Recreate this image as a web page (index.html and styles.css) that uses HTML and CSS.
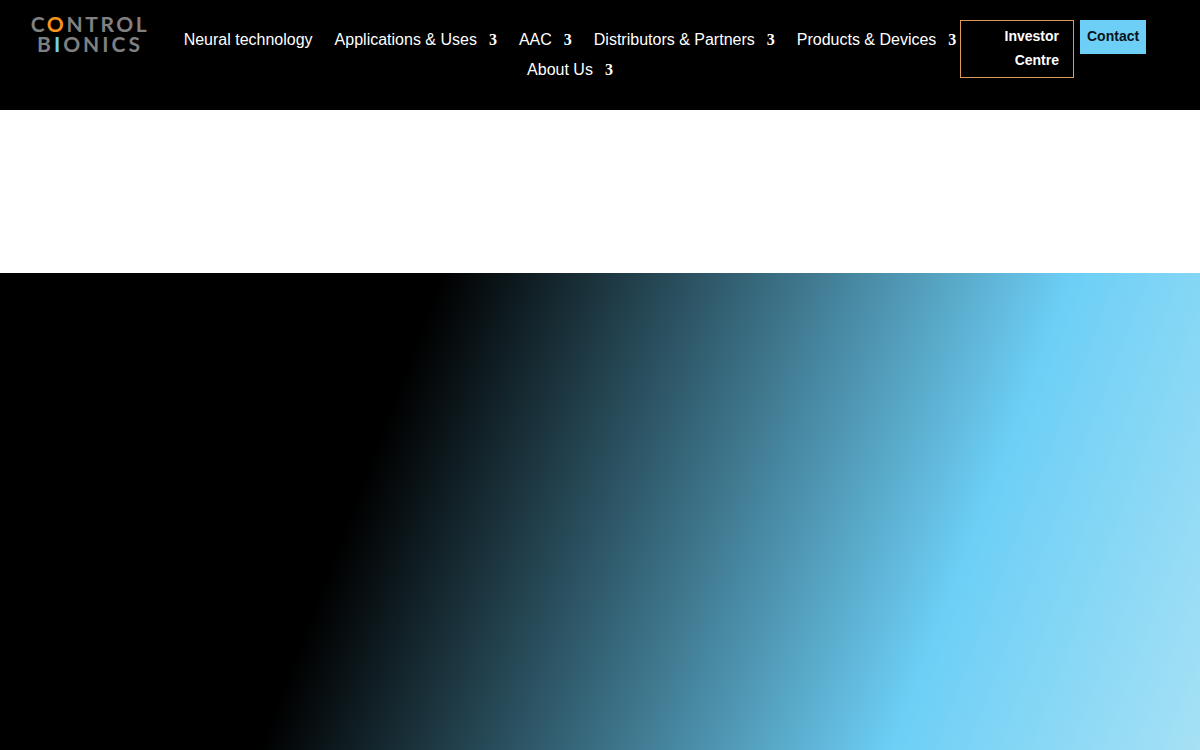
FILE: index.html
```html
<!DOCTYPE html>
<html lang="en">
<head>
<meta charset="utf-8">
<title>Control Bionics</title>
<link rel="stylesheet" href="styles.css">
</head>
<body>
<header class="header">
  <a class="logo" href="#">
    <span class="logo-line logo-top">C<span class="logo-o">O</span>NTROL</span>
    <span class="logo-line logo-bottom">B<span class="logo-i">I</span>ONICS</span>
  </a>
  <nav class="nav">
    <a class="nav-item" href="#">Neural technology</a>
    <a class="nav-item" href="#">Applications &amp; Uses<span class="caret">3</span></a>
    <a class="nav-item" href="#">AAC<span class="caret">3</span></a>
    <a class="nav-item" href="#">Distributors &amp; Partners<span class="caret">3</span></a>
    <a class="nav-item" href="#">Products &amp; Devices<span class="caret">3</span></a>
    <a class="nav-item" href="#">About Us<span class="caret">3</span></a>
  </nav>
  <a class="investor" href="#">Investor<br>Centre</a>
  <a class="contact" href="#">Contact</a>
</header>
<section class="spacer"></section>
<section class="hero"></section>
</body>
</html>
```
FILE: styles.css
```css
* { box-sizing: border-box; }
html, body { margin: 0; padding: 0; }
body {
  width: 1200px;
  height: 750px;
  overflow: hidden;
  background: #fff;
  font-family: "Liberation Sans", Arial, sans-serif;
}
a { text-decoration: none; }
.header {
  height: 110px;
  background: #000;
  display: flex;
  align-items: flex-start;
  padding: 20px 0 0 31px;
}
.logo {
  width: 118px;
  margin-top: -6px;
  display: flex;
  flex-direction: column;
  align-items: center;
  font-family: "Lato", sans-serif;
  font-weight: 700;
  color: #808080;
  line-height: 20px;
  font-size: 21px;
  flex: none;
}
.logo-line { display: block; white-space: nowrap; }
.logo-top { letter-spacing: 2.6px; }
.logo-bottom { letter-spacing: 3px; }
.logo-o { color: #f7941d; }
.logo-i { color: #6dcff6; }
.nav {
  width: 780px;
  margin-left: 31px;
  margin-top: 4px;
  padding-top: 1px;
  display: flex;
  flex-wrap: wrap;
  justify-content: center;
  column-gap: 22px;
  flex: none;
}
.nav-item {
  color: #fff;
  font-size: 16px;
  line-height: 30px;
  white-space: nowrap;
}
.caret {
  font-family: "Liberation Serif", serif;
  font-weight: 700;
  margin-left: 12px;
}
.investor {
  width: 114px;
  height: 58px;
  padding: 3px 14px 0 0;
  border: 1px solid #e09a5a;
  color: #fff;
  font-size: 14px;
  font-weight: 700;
  line-height: 24px;
  text-align: right;
  flex: none;
}
.contact {
  height: 34px;
  margin-left: 6px;
  padding: 4px 7px;
  background: #6dcff6;
  color: #0a1220;
  font-size: 14px;
  font-weight: 700;
  line-height: 24px;
  flex: none;
}
.spacer { height: 163px; background: #fff; }
.hero {
  height: 477px;
  background: linear-gradient(111deg, #000 32%, #6dcff6 77.7%, #a6e1f5 100%);
}
```
